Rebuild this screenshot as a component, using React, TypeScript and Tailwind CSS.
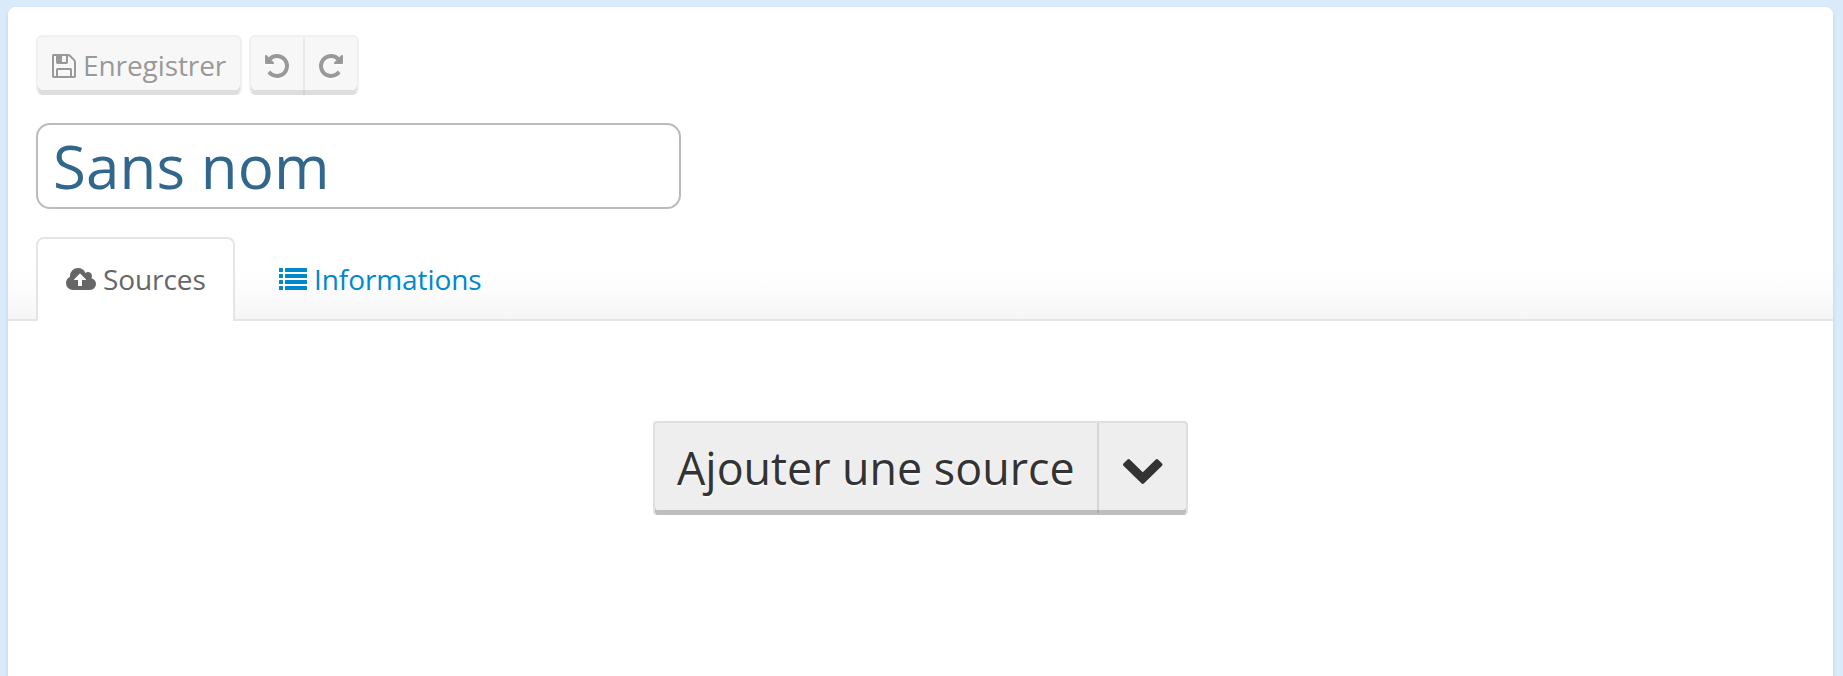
import React from "react";

const SaveIcon = () => (
  <svg className="h-6 w-6 shrink-0 drop-shadow-[0_2px_1px_rgba(255,255,255,0.75)]" viewBox="0 0 1536 1536" fill="currentColor">
    <path d="M384 1408h768v-384h-768v384zM1280 1408h128v-896q0-14-10-38.5t-20-34.5l-281-281q-10-10-34-20t-39-10v416q0 40-28 68t-68 28h-576q-40 0-68-28t-28-68v-416h-128v1280h128v-416q0-40 28-68t68-28h832q40 0 68 28t28 68v416zM896 480v-320q0-13-9.5-22.5t-22.5-9.5h-192q-13 0-22.5 9.5t-9.5 22.5v320q0 13 9.5 22.5t22.5 9.5h192q13 0 22.5-9.5t9.5-22.5zM1536 512v928q0 40-28 68t-68 28h-1344q-40 0-68-28t-28-68v-1344q0-40 28-68t68-28h928q40 0 88 20t76 48l280 280q28 28 48 76t20 88z" />
  </svg>
);

const UndoIcon = ({ className = "" }: { className?: string }) => (
  <svg className={`h-6 w-6 shrink-0 drop-shadow-[0_2px_1px_rgba(255,255,255,0.75)] ${className}`} viewBox="0 128 1536 1536" fill="currentColor">
    <path d="M1536 896q0 156-61 298t-164 245-245 164-298 61q-172 0-327-72.5t-264-204.5q-7-10-6.5-22.5t8.5-20.5l137-138q10-9 25-9 16 2 23 12 73 95 179 147t225 52q104 0 198.5-40.5t163.5-109.5 109.5-163.5 40.5-198.5-40.5-198.5-109.5-163.5-163.5-109.5-198.5-40.5q-98 0-188 35.5t-160 101.5l137 138q31 30 14 69-17 40-59 40h-448q-26 0-45-19t-19-45v-448q0-42 40-59 39-17 69 14l130 129q107-101 244.5-156.5t284.5-55.5q156 0 298 61t245 164 164 245 61 298z" />
  </svg>
);

const CloudUploadIcon = () => (
  <svg className="h-[22px] w-[30px] shrink-0" viewBox="0 128 1920 1408" fill="currentColor">
    <path d="M1280 864q0-14-9-23l-352-352q-9-9-23-9t-23 9l-351 351q-10 12-10 24 0 14 9 23t23 9h224v352q0 13 9.5 22.5t22.5 9.5h192q13 0 22.5-9.5t9.5-22.5v-352h224q13 0 22.5-9.5t9.5-22.5zM1920 1152q0 159-112.5 271.5t-271.5 112.5h-1088q-185 0-316.5-131.5t-131.5-316.5q0-130 70-240t188-165q-2-30-2-43 0-212 150-362t362-150q156 0 285.5 87t188.5 231q71-62 166-62 106 0 181 75t75 181q0 76-41 138 130 31 213.5 135.5t83.5 238.5z" />
  </svg>
);

const ListIcon = () => (
  <svg className="h-[22px] w-7 shrink-0" viewBox="0 0 28 22" fill="currentColor">
    {[0, 6, 12, 18].map((y) => (
      <g key={y}>
        <rect x="0" y={y} width="4" height="4" rx="0.5" />
        <rect x="6" y={y} width="22" height="4" rx="0.5" />
      </g>
    ))}
  </svg>
);

const ChevronDownIcon = () => (
  <svg className="h-[25px] w-[39.5px] shrink-0" viewBox="90 533 1612 1035" preserveAspectRatio="none" fill="currentColor">
    <path d="M1683 808l-742 741q-19 19-45 19t-45-19l-742-741q-19-19-19-45.5t19-45.5l166-165q19-19 45-19t45 19l531 531 531-531q19-19 45-19t45 19l166 165q19 19 19 45.5t-19 45.5z" />
  </svg>
);

export default function App() {
  return (
    <div className="h-[676px] overflow-hidden bg-[#d9eafa] pt-[7px] pr-[10px] pl-2 font-['Open_Sans',sans-serif]">
      <main className="h-[690px] rounded-lg bg-white shadow-[0_2px_4px_rgba(0,0,0,0.1)]">
        <header className="flex h-[314px] flex-col rounded-t-lg border-b-2 border-[#e5e5e5] bg-[linear-gradient(to_bottom,#fff_83%,#fdfdfd_89%,#f6f6f6)] px-7 pt-7">
          <div className="flex gap-[7px] text-[#999]">
            <button className="flex h-[60px] w-[206px] items-center rounded-md border-2 border-b-0 border-[#f0f0f0] bg-[#f7f7f7] pl-[14px] text-[28px] tracking-[-0.09px] shadow-[inset_0_-5px_0_#dedede] [text-shadow:0_2px_2px_rgba(255,255,255,0.75)]">
              <SaveIcon />
              <span className="ml-[7px] pb-[2px]">Enregistrer</span>
            </button>
            <div className="flex h-[60px] w-[110px] rounded-md border-2 border-b-0 border-[#f0f0f0] bg-[#f7f7f7] shadow-[inset_0_-5px_0_#dedede]">
              <button className="flex w-[54px] items-center border-r-2 border-black/5 pl-[14px]">
                <UndoIcon />
              </button>
              <button className="flex items-center pl-[14px]">
                <UndoIcon className="-scale-x-100" />
              </button>
            </div>
          </div>
          <input
            className="mt-7 h-[86px] w-[645px] shrink-0 rounded-[14px] border-2 border-[#bbb] bg-white px-[15px] text-[60px] leading-[80px] tracking-[0.12px] text-[#31678c] outline-none"
            defaultValue="Sans nom"
          />
          <nav className="mt-7 flex h-[84px] shrink-0 text-[28px] tracking-[-0.09px]">
            <a className="flex h-[84px] w-[199px] items-center rounded-t-lg border-2 border-b-0 border-[#e5e5e5] bg-white pb-[2px] pl-7 text-[#666]">
              <CloudUploadIcon />
              <span className="ml-[7px]">Sources</span>
            </a>
            <a className="ml-[44px] flex h-[84px] items-center text-[#0088cc]">
              <ListIcon />
              <span className="ml-[7px]">Informations</span>
            </a>
          </nav>
        </header>
        <section className="flex justify-center pt-[100px]">
          <div className="flex h-[94px] w-[535px] rounded border-2 border-b-0 border-[#e0e0e0] bg-[#eee] text-[#333] shadow-[inset_0_-5px_0_#bebebe]">
            <button className="mb-[2px] flex w-[444px] items-center border-r-2 border-black/10 pl-[22px] text-[44.8px] whitespace-nowrap [text-shadow:0_2px_2px_rgba(255,255,255,0.75)]">
              Ajouter une source
            </button>
            <button className="flex items-center pt-[5px] pl-6">
              <ChevronDownIcon />
            </button>
          </div>
        </section>
      </main>
    </div>
  );
}
